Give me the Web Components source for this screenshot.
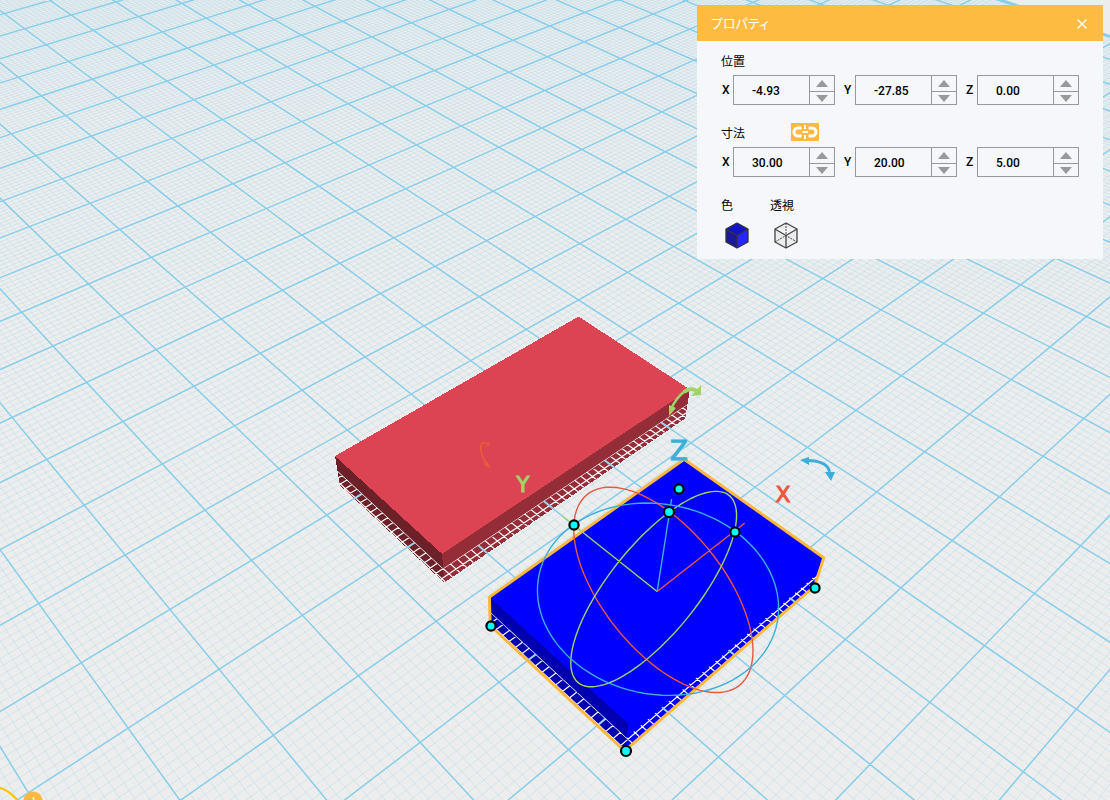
<!DOCTYPE html>
<html lang="ja">
<head>
<meta charset="utf-8">
<title>プロパティ</title>
<style>
html, body { margin: 0; height: 100%; overflow: hidden; background: #ededed; }
body { font-family: Roboto, "Noto Sans CJK JP", sans-serif; font-size: 12px; color: #000; }
</style>
</head>
<body>
<modeler-app></modeler-app>
<script>
/* Camera: rows give screen x, screen y and depth for (u, v, w, 1); one unit is one major cell. */
const CAM = [
  [87.600407, 36.992485, -30.8, 0.04109],
  [-24.270248, 27.062768, -90.6, 549.64169],
  [0.039989444, -0.044542745, -0.06, 1]
];
const project = (u, v, w = 0) => {
  const [x, y, q] = CAM.map(r => r[0] * u + r[1] * v + r[2] * w + r[3]);
  return [x / q, y / q];
};
const path = (pts, close) =>
  'M' + pts.map(p => project(...p).map(n => n.toFixed(2)).join(' ')).join('L') + (close ? 'Z' : '');

const U0 = -4, U1 = 22, V0 = -24, V1 = 11;
function gridLines(step, major, u0 = U0, u1 = U1, v0 = V0, v1 = V1) {
  let d = '';
  for (let i = Math.round(u0 * step); i <= u1 * step; i++)
    if (major || i % 10) d += path([[i / step, v0], [i / step, v1]]);
  for (let i = Math.round(v0 * step); i <= v1 * step; i++)
    if (major || i % 10) d += path([[u0, i / step], [u1, i / step]]);
  return d;
}

function box(id, [u0, u1, v0, v1], h, top, left, right) {
  const lower = path([[u0, v0, 0], [u0, v1, 0], [u1, v1, 0], [u1, v1, -h], [u0, v1, -h], [u0, v0, -h]], true);
  return `
    <clipPath id="${id}"><path d="${lower}"/></clipPath>
    <g shape-rendering="crispEdges">
      <path fill="${left}" d="${path([[u0, v0, h], [u0, v1, h], [u0, v1, -h], [u0, v0, -h]], true)}"/>
      <path fill="${right}" d="${path([[u0, v1, h], [u1, v1, h], [u1, v1, -h], [u0, v1, -h]], true)}"/>
      <path fill="${top}" d="${path([[u0, v0, h], [u1, v0, h], [u1, v1, h], [u0, v1, h]], true)}"/>
    </g>
    <g clip-path="url(#${id})" fill="none">
      <path stroke="#fff" stroke-width="1.2" d="${gridLines(10, false, 3, 8, 1, 7)}"/>
      <path stroke="#9ad3ec" stroke-width="2" d="${gridLines(1, true, 3, 8, 1, 7)}"/>
    </g>`;
}

const ring = f => path(Array.from({ length: 96 }, (_, i) => {
  const a = i / 48 * Math.PI;
  return f(1.285 * Math.cos(a), 1.285 * Math.sin(a));
}), true);

class WorkplaneScene extends HTMLElement {
  constructor() {
    super();
    const C = [5.01, 5.28];
    const B = [3.5, 6.52, 4.28, 6.28], h = 0.25;
    const outline = path([[B[0], B[2], h], [B[1], B[2], h], [B[1], B[3], h], [B[1], B[3], -h], [B[0], B[3], -h], [B[0], B[2], -h]], true);
    const dot = (x, y, r) => `<circle cx="${x}" cy="${y}" r="${r}"/>`;
    this.attachShadow({ mode: 'open' }).innerHTML = `
      <style>
        :host { display: block; min-width: 0; min-height: 0; overflow: hidden; }
        svg { display: block; width: 100%; height: 100%; }
        text { font-family: "DejaVu Sans", sans-serif; text-anchor: middle; stroke-width: 1; }
      </style>
      <svg viewBox="0 0 1110 800" preserveAspectRatio="xMinYMin slice" role="img" aria-label="3D">
        <g fill="none">
          <path stroke="#a9d9ec" stroke-opacity=".4" d="${gridLines(10, false)}"/>
          <path stroke="#87ceeb" stroke-width="1.5" d="${gridLines(1, true)}"/>
          <path stroke="#87ceeb" stroke-width="3" d="${path([[U1, V0], [U1, V1]])}"/>
        </g>
        ${box('red', [3.5, 7.5, 1.5, 3.5], h, '#dc4453', '#6c2128', '#952d39')}
        ${box('blue', B, h, '#0000ff', '#0000b0', '#0000ff')}
        <path fill="none" stroke="#fdb93f" stroke-width="3" stroke-linejoin="round" d="${outline}"/>
        <g fill="none" stroke-width="1.4">
          <path stroke="#e9583f" d="${ring((a, b) => [C[0], C[1] + a, b])}${path([[...C], [6.47, 5.28]])}"/>
          <path stroke="#a0d468" d="${ring((a, b) => [C[0] + a, C[1], b])}${path([[...C], [5, 3.82]])}"/>
          <path stroke="#3bafda" d="${ring((a, b) => [C[0] + a, C[1] + b, 0])}${path([[...C], [...C, 1.47]])}"/>
        </g>
        <g fill="#00ffff" stroke="#000" stroke-width="2.2">
          ${dot(574, 525, 4.6)}${dot(669, 512, 5)}${dot(735, 532, 4.6)}${dot(679, 489, 4.6)}
          ${dot(491, 626, 4.6)}${dot(626, 751, 5)}${dot(815, 588, 4.6)}
        </g>
        <text x="783" y="502" font-size="22" fill="#e9583f" stroke="#e9583f">X</text>
        <text x="523" y="492" font-size="21" fill="#a0d468" stroke="#a0d468">Y</text>
        <text x="679" y="460" font-size="26" fill="#3bafda" stroke="#3bafda">Z</text>
        <g fill="none">
          <path stroke="#a0d468" stroke-width="2.4" d="M671 409Q676 398 685 391"/>
          <path stroke="#a0d468" stroke-width="4" d="M684 392Q690 387 697 391"/>
          <path stroke="#e9583f" stroke-width="2" d="M488 444Q480 439 481 450Q482 458 487 464"/>
          <path stroke="#3bafda" stroke-width="2.8" d="M807 460.500Q829 461 829.500 473"/>
        </g>
        <path fill="#a0d468" d="M701 385V395L691 396ZM669 416L669 405L676 408Z"/>
        <path fill="#e9583f" d="M489 441L490 445L485 447ZM491 469L483 464L488 462Z"/>
        <path fill="#3bafda" d="M800 460L809 457V465ZM831 481L825 472H835Z"/>
        <path fill="none" stroke="#ffc107" stroke-width="2" d="M-2 787.500Q8 789 18 801"/>
        <circle cx="33" cy="801" r="9.600" fill="#fdb93f"/>
        <path stroke="#fff" stroke-width="1.500" d="M33.500 797V806M29 801H38"/>
      </svg>`;
  }
}
customElements.define('workplane-scene', WorkplaneScene);

class SpinField extends HTMLElement {
  constructor() {
    super();
    this.attachShadow({ mode: 'open' }).innerHTML = `
      <style>
        :host { display: grid; grid-template-columns: 12px minmax(0, 1fr); align-items: center; }
        label { font-size: 12px; font-weight: 500; padding-left: 1px; line-height: 30px; }
        .box { display: grid; grid-template-columns: minmax(0, 1fr) 25px; height: 30px; box-sizing: border-box; border: 1px solid #999; }
        input { min-width: 0; border: 0; margin: 0; padding: 2px 0 0 18px; background: none; font: 500 12px Roboto, sans-serif; color: #000; outline: none; }
        .spin { display: grid; grid-template-rows: 15px 1fr; border-left: 1px solid #999; }
        button { display: flex; align-items: center; justify-content: center; border: 0; margin: 0; padding: 0; background: none; min-height: 0; }
        button + button { border-top: 1px solid #999; }
        svg { display: block; width: 12px; height: 7px; fill: #999; }
      </style>
      <label for="value"></label>
      <div class="box">
        <input id="value" type="text" inputmode="decimal">
        <div class="spin">
          <button type="button" aria-label="+"><svg viewBox="0 0 12 7"><path d="M6 0L12 7H0Z"/></svg></button>
          <button type="button" aria-label="-"><svg viewBox="0 0 12 7"><path d="M6 7L0 0H12Z"/></svg></button>
        </div>
      </div>`;
    const root = this.shadowRoot, input = root.querySelector('input');
    root.querySelector('label').textContent = this.getAttribute('label');
    input.value = this.getAttribute('value');
    root.querySelectorAll('button').forEach((b, i) =>
      b.addEventListener('click', () => { input.value = (Number(input.value) + (i ? -1 : 1)).toFixed(2); }));
  }
}
customElements.define('spin-field', SpinField);

class PropertyGroup extends HTMLElement {
  constructor() {
    super();
    this.attachShadow({ mode: 'open' }).innerHTML = `
      <style>
        :host { display: grid; gap: 6px; }
        header { display: grid; grid-template-columns: 70px auto 1fr; height: 18px; }
        span { padding-top: 2px; line-height: 18px; }
        .row { display: grid; grid-template-columns: repeat(3, minmax(0, 1fr)); gap: 8px; }
      </style>
      <header><span></span><slot name="action"></slot></header>
      <div class="row"><slot></slot></div>`;
    this.shadowRoot.querySelector('span').textContent = this.getAttribute('heading');
  }
}
customElements.define('property-group', PropertyGroup);

class CubeButton extends HTMLElement {
  constructor() {
    super();
    const solid = this.getAttribute('kind') === 'solid';
    const art = solid
      ? `<path fill="#1212c8" d="M12 1L23 7L12 13.500L1 7Z"/><path fill="#1a1a96" d="M1 7L12 13.500V26L1 20Z"/><path fill="#2626ff" d="M23 7L12 13.500V26L23 20Z"/>
         <path fill="none" stroke="#333" stroke-width="1.300" stroke-linejoin="round" d="M12 1L23 7V20L12 26L1 20V7ZM1 7L12 13.500L23 7M12 13.500V26"/>`
      : `<path fill="#ececec" stroke="#444" stroke-width="1.300" stroke-linejoin="round" d="M12 1L23 7V20L12 26L1 20V7ZM1 7L12 13.500L23 7M12 13.500V26"/>
         <path fill="none" stroke="#444" stroke-dasharray="2 1" d="M12 1V13.500M1 20L12 13.500L23 20"/>`;
    this.attachShadow({ mode: 'open' }).innerHTML = `
      <style>
        :host { display: grid; gap: 4px; line-height: 18px; }
        label { padding-top: 2px; }
        button { display: flex; align-items: center; justify-content: center; width: 32px; height: 32px; margin: 0; padding: 0; border: 0; background: none; }
        svg { display: block; width: 24px; height: 27px; }
      </style>
      <label for="b"></label>
      <button id="b" type="button"><svg viewBox="0 0 24 27">${art}</svg></button>`;
    this.shadowRoot.querySelector('label').textContent = this.getAttribute('label');
  }
}
customElements.define('cube-button', CubeButton);

class PropertyPanel extends HTMLElement {
  constructor() {
    super();
    this.attachShadow({ mode: 'open' }).innerHTML = `
      <style>
        :host { display: block; background: #f5f7fb; }
        .bar { display: flex; align-items: center; justify-content: space-between; box-sizing: border-box; height: 36px; padding: 2px 14px 0; background: #fdbb41; color: #fff; }
        h1 { margin: 0; font-size: 13px; line-height: 18px; font-weight: 400; font-feature-settings: "palt"; }
        .close { display: flex; align-items: center; justify-content: center; width: 14px; height: 14px; padding: 0; border: 0; background: none; }
        .close svg { width: 10px; height: 10px; stroke: #fff; stroke-width: 1.400; }
        .body { display: grid; gap: 18px; padding: 10px 24px 8px; }
        .looks { display: flex; gap: 17px; }
        .link { display: block; width: 28px; height: 18px; margin: 0; padding: 0; border: 0; background: #fdb93f; }
        .link svg { display: block; width: 28px; height: 18px; fill: none; stroke: #fff; }
      </style>
      <div class="bar">
        <h1>プロパティ</h1>
        <button class="close" type="button" aria-label="close"><svg viewBox="0 0 10 10"><path d="M.5 .5L9.500 9.500M9.500 .5L.5 9.500"/></svg></button>
      </div>
      <div class="body">
        <property-group heading="位置">
          <spin-field label="X" value="-4.93"></spin-field>
          <spin-field label="Y" value="-27.85"></spin-field>
          <spin-field label="Z" value="0.00"></spin-field>
        </property-group>
        <property-group heading="寸法">
          <button slot="action" class="link" type="button" aria-label="link">
            <svg viewBox="0 0 28 18"><path stroke-width="3" d="M10.500 5H7A4 4 0 0 0 7 13H10.500M17.500 5H21A4 4 0 0 1 21 13H17.500"/><path stroke-width="2" d="M14 2V6M14 12V16M11.500 9H17"/></svg>
          </button>
          <spin-field label="X" value="30.00"></spin-field>
          <spin-field label="Y" value="20.00"></spin-field>
          <spin-field label="Z" value="5.00"></spin-field>
        </property-group>
        <div class="looks">
          <cube-button label="色" kind="solid"></cube-button>
          <cube-button label="透視" kind="wire"></cube-button>
        </div>
      </div>`;
  }
}
customElements.define('property-panel', PropertyPanel);

class ModelerApp extends HTMLElement {
  constructor() {
    super();
    this.attachShadow({ mode: 'open' }).innerHTML = `
      <style>
        :host { display: grid; grid-template: minmax(0, 1fr) / minmax(0, 1fr); height: 100vh; }
        workplane-scene, property-panel { grid-area: 1 / 1; }
        property-panel { place-self: start end; width: 406px; max-width: calc(100% - 14px); margin: 5px 7px; }
      </style>
      <workplane-scene></workplane-scene>
      <property-panel></property-panel>`;
  }
}
customElements.define('modeler-app', ModelerApp);
</script>
</body>
</html>
